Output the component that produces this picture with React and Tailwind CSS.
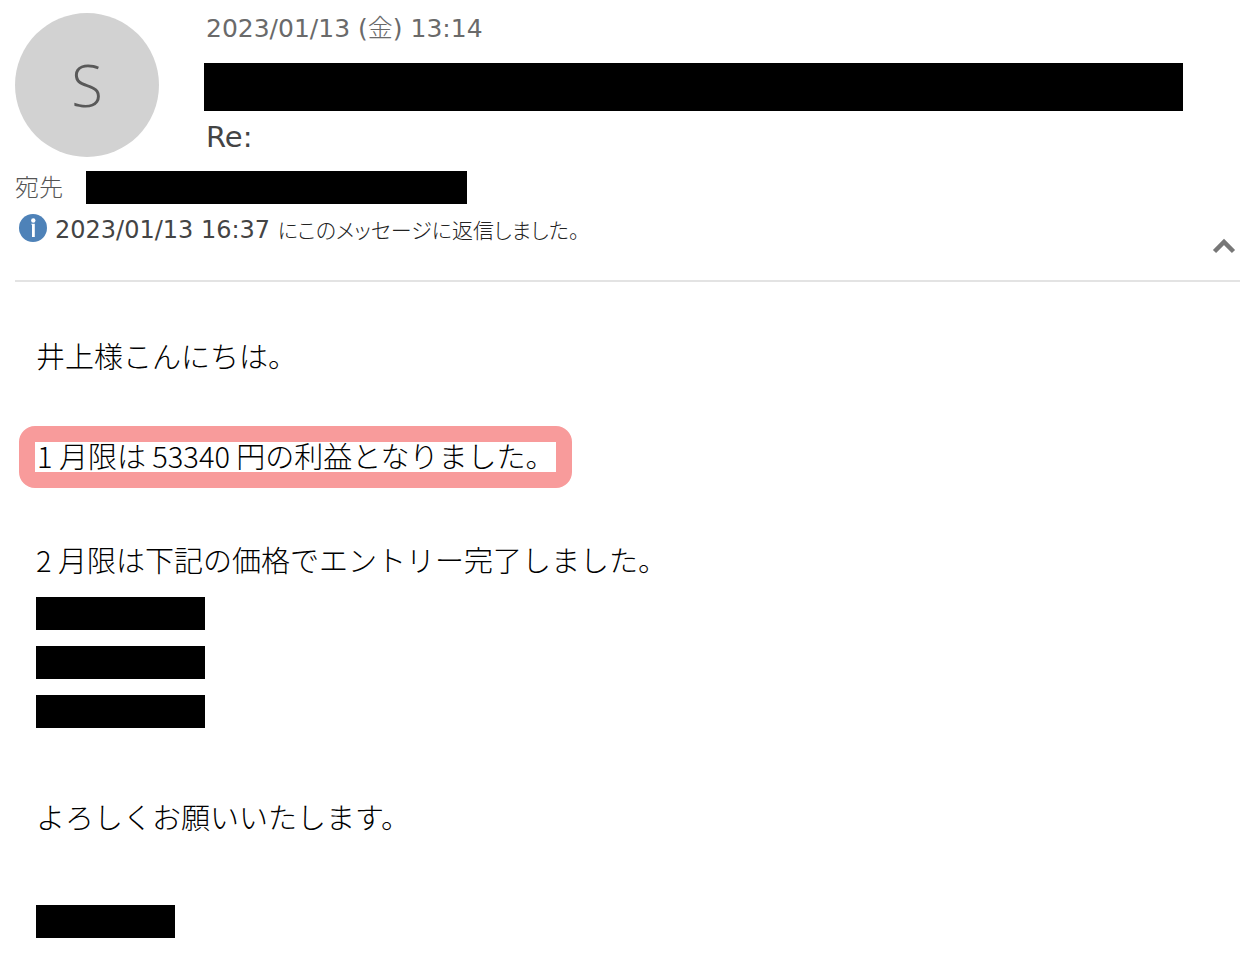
import clsx from "clsx";

function Redacted({ className }) {
  return <div aria-hidden="true" className={clsx("bg-black", className)} />;
}

function InfoIcon() {
  return (
    <svg
      viewBox="0 0 28 28"
      className="size-7 shrink-0"
      role="img"
      aria-label="情報"
    >
      <circle cx="14" cy="14" r="14" fill="#4e82b8" />
      <circle cx="14.3" cy="6.5" r="2.2" fill="#fff" />
      <path d="M12.2 9.8h3.6v13.2h-2.8V10.6h-.8z" fill="#fff" />
    </svg>
  );
}

function MessageHeader() {
  return (
    <header className="border-b-2 border-[#e3e3e3] pt-[13px] pb-[18px] font-['DejaVu_Sans','Noto_Sans_CJK_JP',sans-serif] text-2xl">
      <div className="flex gap-[45px]">
        <div className="flex size-36 shrink-0 items-center justify-center rounded-full bg-[#d2d2d2] font-['Open_Sans',sans-serif] text-[58px] leading-none font-[350] text-[#595959]">
          S
        </div>
        <div className="min-w-0 flex-1 pr-[57px]">
          <p className="pl-0.5 text-[25px] leading-8 text-[#6a6a6a]">
            <time dateTime="2023-01-13T13:14">
              2023/01/13 (<span className="font-light">金</span>) 13:14
            </time>
          </p>
          <Redacted className="mt-[18px] h-12" />
          <h1 className="pl-0.5 text-[29px] leading-[52px] text-[#444]">Re:</h1>
        </div>
      </div>

      <div className="mt-2 flex items-center gap-[23px]">
        <span className="font-light leading-8 text-[#555]">宛先</span>
        <Redacted className="h-[33px] w-[381px]" />
      </div>

      <div className="flex items-start justify-between pt-1.5">
        <p className="flex gap-2 pt-1 pl-1 leading-8 text-[#444]">
          <InfoIcon />
          <span>
            2023/01/13 16:37{" "}
            <span className="text-[21px] font-light text-[#222] [font-feature-settings:'palt']">
              にこのメッセージに返信しました。
            </span>
          </span>
        </p>
        <button
          type="button"
          aria-label="ヘッダーを折りたたむ"
          className="mt-5 px-1 py-2"
        >
          <svg viewBox="0 0 24 16" className="h-4 w-6" aria-hidden="true">
            <path
              d="M2.5 13.5 12 4l9.5 9.5"
              fill="none"
              stroke="#777"
              strokeWidth="4.5"
            />
          </svg>
        </button>
      </div>
    </header>
  );
}

function MessageBody() {
  return (
    <main className="pt-[60px] pb-4 pl-[21px] font-['Noto_Sans_CJK_JP',sans-serif] text-[29px] leading-[26px] font-light text-black">
      <p>井上様こんにちは。</p>
      <p className="mt-[58px] -ml-[17px] w-fit rounded-2xl border-16 border-[#f89b9b] px-0.5 pb-1">
        1 月限は 53340 円の利益となりました。
      </p>
      <p className="mt-[58px]">2 月限は下記の価格でエントリー完了しました。</p>
      <div className="mt-[25px] flex flex-col gap-4">
        <Redacted className="h-[33px] w-[169px]" />
        <Redacted className="h-[33px] w-[169px]" />
        <Redacted className="h-[33px] w-[169px]" />
      </div>
      <p className="mt-[75px]">よろしくお願いいたします。</p>
      <Redacted className="mt-[76px] h-[33px] w-[139px]" />
    </main>
  );
}

export default function App() {
  return (
    <div className="min-h-screen bg-white pr-1.5 pl-[15px]">
      <MessageHeader />
      <MessageBody />
    </div>
  );
}
